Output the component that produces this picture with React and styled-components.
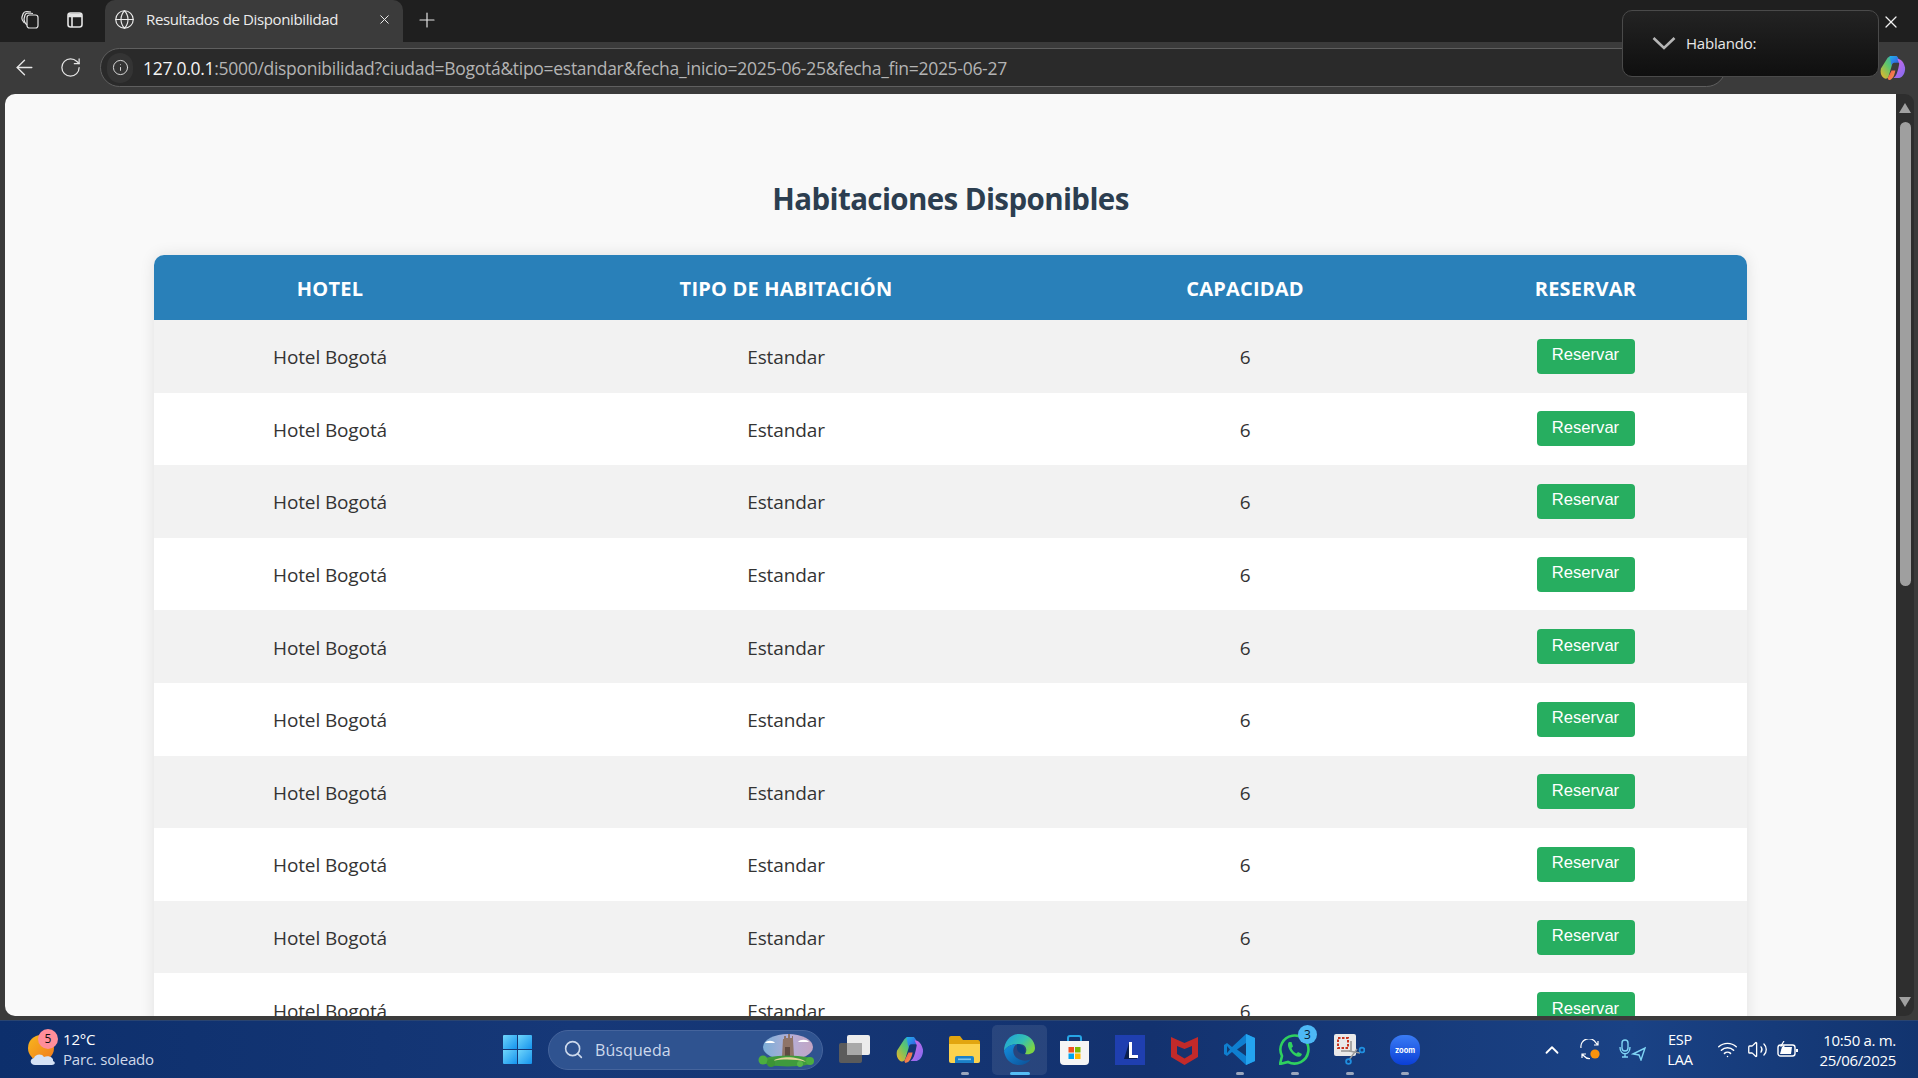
import React from 'react';
import styled, { createGlobalStyle } from 'styled-components';
import { ArrowLeft, RotateCw, Info, Globe, X, Plus, ChevronUp, Search, Wifi, Volume2 } from 'lucide-react';

const UI = '"Open Sans", "Noto Sans", "Liberation Sans", sans-serif';

const GlobalStyle = createGlobalStyle`
    html, body {
        margin: 0;
        height: 100%;
        overflow: hidden;
        background: #3b3b3b;
    }
    * {
        box-sizing: border-box;
    }
`;

const Screen = styled.div`
    position: relative;
    display: flex;
    flex-direction: column;
    height: 100vh;
    overflow: hidden;
    font-family: ${UI};
`;

const TabStrip = styled.div`
    display: flex;
    align-items: flex-end;
    height: 42px;
    flex: none;
    background: #1f1f1f;
`;

const StripButton = styled.div`
    display: flex;
    align-items: center;
    justify-content: center;
    width: ${p => p.$w || 44}px;
    height: 42px;
    padding-bottom: 2px;
    color: #e4e4e4;
    flex: none;
`;

const Tab = styled.div`
    display: flex;
    align-items: center;
    width: 298px;
    height: 42px;
    margin-left: 15px;
    padding: 0 11px 4px 9px;
    background: #3b3b3b;
    border-radius: 10px 10px 0 0;
    color: #ececec;
    flex: none;
`;

const TabTitle = styled.span`
    flex: 1;
    margin-left: 11px;
    font-size: 15px;
    letter-spacing: -0.37px;
    white-space: nowrap;
`;

const Toolbar = styled.div`
    display: flex;
    align-items: center;
    height: 52px;
    flex: none;
    padding: 0 12px 1px 0;
    background: #3b3b3b;
`;

const NavButton = styled.div`
    display: flex;
    align-items: center;
    justify-content: center;
    width: ${p => p.$w}px;
    color: #e6e6e6;
    flex: none;
`;

const Omnibox = styled.div`
    display: flex;
    align-items: center;
    width: 1626px;
    height: 39px;
    margin-left: 8px;
    padding-left: 6px;
    border: 1px solid #5f5f5f;
    border-radius: 20px;
    background: #2a2a2a;
    flex: none;
`;

const InfoPill = styled.div`
    display: flex;
    align-items: center;
    justify-content: center;
    width: 26px;
    height: 30px;
    border-radius: 15px;
    background: #343434;
    color: #d8d8d8;
`;

const Url = styled.span`
    margin-left: 10px;
    font-size: 17.5px;
    letter-spacing: -0.29px;
    color: #b4b4b4;
    white-space: nowrap;
`;

const UrlHost = styled.span`
    color: #f4f4f4;
`;

const CopilotSlot = styled.div`
    margin-left: auto;
    display: flex;
`;

const ViewArea = styled.div`
    display: flex;
    flex: 1;
    min-height: 0;
    padding: 0 4px 4px 5px;
    background: #3b3b3b;
`;

const Page = styled.main`
    flex: 1;
    min-width: 0;
    overflow: hidden;
    border-radius: 10px 0 0 10px;
    background: #f9f9f9;
    padding-top: 1px;
    color: #333;
`;

const Heading = styled.h1`
    margin: 85px 0 37px;
    text-align: center;
    font-size: 29.5px;
    line-height: 38px;
    font-weight: 700;
    letter-spacing: -0.6px;
    color: #2c3e50;
`;

const Table = styled.table`
    width: 1593px;
    margin: 0 auto;
    table-layout: fixed;
    border-collapse: collapse;
    border-radius: 10px;
    overflow: hidden;
    background: #fff;
    box-shadow: 0 0 15px rgba(0, 0, 0, 0.1);
`;

const HeadCell = styled.th`
    height: 65px;
    padding: 2px 0 0;
    background: #2980b9;
    color: #fff;
    font-size: 20px;
    font-weight: 700;
    letter-spacing: 0.2px;
    text-transform: uppercase;
    text-align: center;
`;

const Row = styled.tr`
    height: 72.6px;
    background: ${p => (p.$odd ? '#f2f2f2' : '#fff')};
`;

const Cell = styled.td`
    padding: 2px 0 0;
    font-size: 19px;
    letter-spacing: -0.12px;
    text-align: center;
    color: #333;
`;

const ButtonCell = styled.td`
    padding: 0;
`;

const ReserveButton = styled.button`
    display: block;
    width: 98px;
    height: 35px;
    margin: 0 auto;
    padding: 0 0 2px;
    border: none;
    border-radius: 4px;
    background: #27ae60;
    color: #fff;
    font-family: "Liberation Sans", Arial, sans-serif;
    font-size: 16.6px;
`;

const Scrollbar = styled.div`
    display: flex;
    flex-direction: column;
    align-items: center;
    width: 18px;
    flex: none;
    border-radius: 0 9px 9px 0;
    background: #2e2e2e;
`;

const ScrollArrow = styled.div`
    width: 0;
    height: 0;
    margin: ${p => (p.$down ? 'auto 0 9px' : '9px 0 9px')};
    border-left: 6.5px solid transparent;
    border-right: 6.5px solid transparent;
    border-bottom: ${p => (p.$down ? '0' : '10px solid #a0a0a0')};
    border-top: ${p => (p.$down ? '10px solid #a0a0a0' : '0')};
`;

const ScrollThumb = styled.div`
    width: 11px;
    height: 464px;
    border-radius: 6px;
    background: #9f9f9f;
`;

const Taskbar = styled.footer`
    display: flex;
    align-items: center;
    height: 58px;
    flex: none;
    background: linear-gradient(90deg, #0d2f6c 0%, #163878 30%, #13326f 60%, #1a4285 85%, #12346f 100%);
    border-top: 1px solid #2a4470;
    color: #fff;
`;

const Weather = styled.div`
    display: flex;
    align-items: center;
    width: 490px;
    padding-left: 27px;
    flex: none;
`;

const WeatherIcon = styled.div`
    position: relative;
    width: 30px;
    height: 38px;
    flex: none;
`;

const WeatherBadge = styled.span`
    position: absolute;
    top: -2px;
    left: 11px;
    width: 20px;
    height: 20px;
    border-radius: 50%;
    background: #ff8e9a;
    color: #111;
    font-size: 12px;
    line-height: 20px;
    text-align: center;
`;

const WeatherText = styled.div`
    margin: -1px 0 0 6px;
    font-size: 15px;
    line-height: 20px;
    letter-spacing: -0.2px;
`;

const WeatherNote = styled.div`
    color: #cfd9ea;
`;

const TaskSlot = styled.div`
    position: relative;
    display: flex;
    align-items: center;
    justify-content: center;
    width: 55px;
    height: 50px;
    flex: none;
    border-radius: 5px;
    background: ${p => (p.$active ? 'rgba(255,255,255,0.09)' : 'transparent')};
`;

const RunDot = styled.span`
    position: absolute;
    bottom: 0;
    left: 50%;
    width: ${p => (p.$active ? 20 : 8)}px;
    height: 3px;
    margin-left: ${p => (p.$active ? -10 : -4)}px;
    border-radius: 2px;
    background: ${p => (p.$active ? '#55bdf5' : '#9aa6bd')};
`;

const CountBadge = styled.span`
    position: absolute;
    top: 0;
    right: 5px;
    width: 19px;
    height: 19px;
    border-radius: 50%;
    background: #4db8f5;
    color: #0b1c33;
    font-size: 12px;
    line-height: 19px;
    text-align: center;
`;

const SearchBox = styled.div`
    display: flex;
    align-items: center;
    width: 275px;
    height: 40px;
    margin: 0 4px 0 3px;
    padding: 0 6px 0 14px;
    border: 1px solid #45649c;
    border-radius: 20px;
    background: #2f5390;
    color: #cdd9ec;
    flex: none;
`;

const SearchLabel = styled.span`
    flex: 1;
    margin-left: 11px;
    font-size: 16px;
    letter-spacing: 0.1px;
`;

const Tray = styled.div`
    display: flex;
    align-items: center;
    margin-left: auto;
    padding-right: 22px;
`;

const TrayIcon = styled.div`
    display: flex;
    align-items: center;
    justify-content: center;
    width: ${p => p.$w || 30}px;
    flex: none;
`;

const Lang = styled.div`
    width: 44px;
    margin: 0 10px 0 7px;
    font-size: 14.5px;
    line-height: 20px;
    letter-spacing: -0.2px;
    text-align: center;
`;

const Clock = styled.div`
    width: 94px;
    font-size: 15px;
    line-height: 20px;
    letter-spacing: -0.3px;
    text-align: right;
    white-space: nowrap;
`;

const SpeechPanel = styled.div`
    position: absolute;
    top: 10px;
    left: 1622px;
    display: flex;
    align-items: center;
    width: 257px;
    height: 67px;
    padding: 0 0 2px 29px;
    border: 1px solid #4a4a4a;
    border-radius: 10px;
    background: linear-gradient(180deg, #232323, #0f0f0f);
    color: #e8e8e8;
    font-size: 15px;
    letter-spacing: -0.2px;
`;

const SpeechLabel = styled.span`
    margin-left: 10px;
`;

const SpeechClose = styled.div`
    position: absolute;
    top: 12px;
    left: 1881px;
    color: #f2f2f2;
`;

const CopilotMark = ({ size = 28 }) => (
    <svg width={size} height={size} viewBox="0 0 28 28">
        <defs>
            <linearGradient id="cpA" x1="0" y1="0" x2="1" y2="1">
                <stop offset="0" stopColor="#1fb4e8" />
                <stop offset="0.55" stopColor="#2f7ae8" />
                <stop offset="1" stopColor="#2d4fc4" />
            </linearGradient>
            <linearGradient id="cpB" x1="0" y1="1" x2="1" y2="0">
                <stop offset="0" stopColor="#f5b324" />
                <stop offset="0.5" stopColor="#5fc66a" />
                <stop offset="1" stopColor="#25a4d8" />
            </linearGradient>
            <linearGradient id="cpC" x1="0" y1="0" x2="1" y2="1">
                <stop offset="0" stopColor="#d868e6" />
                <stop offset="1" stopColor="#7f6cf0" />
            </linearGradient>
            <linearGradient id="cpD" x1="0" y1="0" x2="1" y2="1">
                <stop offset="0" stopColor="#f04f4f" />
                <stop offset="1" stopColor="#f7a14a" />
            </linearGradient>
        </defs>
        <path d="M9 4 C11 2 13 2 17 2 L19 2 C16 3 15 6 13 13 L10 23 C9 26 7 26 5 25 C2 23 1 19 2 15 Z" fill="url(#cpB)" />
        <path d="M11 2 L18 2 C20 3 21 6 21 9 L16 9 C14 9 13.5 10 13 12 Z" fill="url(#cpA)" />
        <path d="M19 5 C23 5 26 9 27 14 C27.5 19 25 24 21 25 L15 25 C18 23 19 19 20 15 L21 10 Z" fill="url(#cpC)" />
        <path d="M9 25 L13 17 L17 17 C16 22 14 27 10 27 Z" fill="url(#cpD)" />
    </svg>
);

const CollectionsIcon = () => (
    <svg width="20" height="20" viewBox="0 0 20 20" fill="none" stroke="currentColor" strokeWidth="1.2">
        <rect x="7" y="5" width="11" height="13" rx="2.5" />
        <path d="M7 15 C4.5 13 4 11 4 9 L5 5 C5.5 3.5 7 3 8.5 3 L13 3.5" />
        <path d="M4.5 13 C2.5 11 1.5 9 2 7 L3 4 C3.5 2.5 5 1.5 7 1.5 L11 2" />
    </svg>
);

const SidebarIcon = () => (
    <svg width="18" height="18" viewBox="0 0 18 18" fill="none" stroke="currentColor" strokeWidth="1.6">
        <rect x="2" y="2" width="14" height="14" rx="2.5" />
        <path d="M2 5.5 H16 M6 5.5 V16" />
        <path d="M2.5 2.5 H15.5 V5 H2.5 Z" fill="currentColor" stroke="none" />
    </svg>
);

const SpeechChevron = () => (
    <svg width="24" height="14" viewBox="0 0 24 14" fill="none" stroke="#b5b5b5" strokeWidth="2.6">
        <path d="M1.5 2 L12 12 L22.5 2" />
    </svg>
);

const WeatherArt = () => (
    <svg width="30" height="38" viewBox="0 0 30 38">
        <defs>
            <linearGradient id="sun" x1="0" y1="0" x2="1" y2="1">
                <stop offset="0" stopColor="#f8b81e" />
                <stop offset="1" stopColor="#f0791c" />
            </linearGradient>
        </defs>
        <circle cx="14" cy="17" r="13" fill="url(#sun)" />
        <path d="M8 34 C3 34 2 28 7 27 C8 23 15 22 17 26 C22 24 27 27 26 30 C29 31 28 34 25 34 Z" fill="#d5e2f5" />
    </svg>
);

const StartIcon = () => (
    <svg width="29" height="29" viewBox="0 0 29 29">
        <defs>
            <linearGradient id="win" x1="0" y1="0" x2="1" y2="1">
                <stop offset="0" stopColor="#6fd5fb" />
                <stop offset="1" stopColor="#1493ee" />
            </linearGradient>
        </defs>
        <path d="M1 0 H14 V14 H0 V1 A1 1 0 0 1 1 0 Z" fill="url(#win)" />
        <path d="M15 0 H28 A1 1 0 0 1 29 1 V14 H15 Z" fill="url(#win)" />
        <path d="M0 15 H14 V29 H1 A1 1 0 0 1 0 28 Z" fill="url(#win)" />
        <path d="M15 15 H29 V28 A1 1 0 0 1 28 29 H15 Z" fill="url(#win)" />
    </svg>
);

const SearchArt = () => (
    <svg width="58" height="34" viewBox="0 0 58 34">
        <defs>
            <linearGradient id="sky" x1="0" y1="0" x2="1" y2="0">
                <stop offset="0" stopColor="#8fc6ea" />
                <stop offset="0.6" stopColor="#d9c3e6" />
                <stop offset="1" stopColor="#e8b9d0" />
            </linearGradient>
        </defs>
        <ellipse cx="30" cy="14" rx="25" ry="13" fill="url(#sky)" opacity="0.8" />
        <path d="M7 10 C9 7 15 7 17 10 Z M40 9 C42 6 49 6 51 9 Z" fill="#fff" />
        <path d="M24 24 L25 6 H26 V3 H28 V5 H30 V1 H32 V5 H34 V3 H35 V6 L36 24 Z" fill="#8f7468" />
        <rect x="27" y="14" width="5" height="9" fill="#5f4a42" />
        <ellipse cx="30" cy="28" rx="26" ry="5.5" fill="#3f9a3c" />
        <path d="M15 28 C22 23 40 23 48 29 C38 26 24 26 15 28 Z" fill="#e2d49a" />
        <circle cx="5" cy="27" r="4.5" fill="#4cae3f" />
        <circle cx="13" cy="30" r="4" fill="#3c9435" />
        <circle cx="52" cy="28" r="4" fill="#4cae3f" />
        <circle cx="42" cy="31" r="3" fill="#57b548" />
    </svg>
);

const TaskViewIcon = () => (
    <svg width="31" height="29" viewBox="0 0 31 29">
        <rect x="0" y="8" width="23" height="20" rx="2" fill="#5b5b5b" />
        <rect x="8" y="0" width="23" height="20" rx="2" fill="#ececec" />
        <rect x="8" y="8" width="15" height="12" fill="#a9a9a9" />
    </svg>
);

const ExplorerIcon = () => (
    <svg width="31" height="27" viewBox="0 0 31 27">
        <path d="M0 2 A2 2 0 0 1 2 0 H11 L14 4 H29 A2 2 0 0 1 31 6 V10 H0 Z" fill="#e2a50f" />
        <path d="M0 8 H31 V25 A2 2 0 0 1 29 27 H2 A2 2 0 0 1 0 25 Z" fill="#fcd24d" />
        <path d="M6 27 V22 A2 2 0 0 1 8 20 H23 A2 2 0 0 1 25 22 V27 Z" fill="#1b80c8" />
        <rect x="9" y="22.5" width="13" height="1.6" fill="#7cc3ee" />
    </svg>
);

const EdgeIcon = () => (
    <svg width="31" height="31" viewBox="0 0 31 31">
        <defs>
            <linearGradient id="edgeTop" x1="0" y1="0" x2="1" y2="0.6">
                <stop offset="0" stopColor="#1b9de2" />
                <stop offset="0.6" stopColor="#35c1b1" />
                <stop offset="1" stopColor="#7cd444" />
            </linearGradient>
            <linearGradient id="edgeLow" x1="0" y1="0" x2="1" y2="1">
                <stop offset="0" stopColor="#1490df" />
                <stop offset="1" stopColor="#0c4f96" />
            </linearGradient>
        </defs>
        <path d="M15 0 C24 0 31 6 31 14 C31 19 26 21 21 20 C24 16 22 10 15 10 C8 10 3 12 0 17 C0 8 6 0 15 0 Z" fill="url(#edgeTop)" />
        <path d="M0 17 C3 12 8 10 13 10 C7 13 8 24 17 26 C20 27 24 27 27 25 C24 29 20 31 15 31 C7 31 1 25 0 17 Z" fill="url(#edgeLow)" />
        <path d="M13 10 C18 10 22 14 21 20 C17 20 13 18 13 14 Z" fill="#0d3f82" />
    </svg>
);

const StoreIcon = () => (
    <svg width="29" height="30" viewBox="0 0 29 30">
        <path d="M8 7 V3 A2 2 0 0 1 10 1 H19 A2 2 0 0 1 21 3 V7" fill="none" stroke="#27a5e6" strokeWidth="2" />
        <path d="M0 6 H29 V26 A4 4 0 0 1 25 30 H4 A4 4 0 0 1 0 26 Z" fill="#f5f5f5" />
        <rect x="8.5" y="12" width="5.5" height="5.5" fill="#f25022" />
        <rect x="15" y="12" width="5.5" height="5.5" fill="#7fba00" />
        <rect x="8.5" y="18.5" width="5.5" height="5.5" fill="#00a4ef" />
        <rect x="15" y="18.5" width="5.5" height="5.5" fill="#ffb900" />
    </svg>
);

const LIcon = () => (
    <svg width="30" height="30" viewBox="0 0 30 30">
        <rect width="30" height="30" fill="#1f3fb0" />
        <path d="M9 24 L14 8 V22 H22 V24 Z" fill="#0b1f4f" />
        <path d="M14 7 H17 V20 H23 V23 H14 Z" fill="#fff" />
    </svg>
);

const McafeeIcon = () => (
    <svg width="27" height="30" viewBox="0 0 27 30">
        <path d="M0 2 L13.5 8 L27 2 V22 L13.5 30 L0 22 Z" fill="#c22a2a" />
        <path d="M6 11 L13.5 14 L21 11 V19 L13.5 23.5 L6 19 Z" fill="#16336f" />
    </svg>
);

const CodeIcon = () => (
    <svg width="31" height="31" viewBox="0 0 31 31">
        <path d="M22 0 L31 4 V27 L22 31 L8 18 L3 22 L0 20 V11 L3 9 L8 13 Z" fill="#0f7fd0" />
        <path d="M22 0 L31 4 V27 L22 31 Z" fill="#24a4ef" />
        <path d="M22 9 V22 L13 15.5 Z" fill="#12386f" />
        <path d="M3 12 L6 15.5 L3 19 Z" fill="#12386f" />
    </svg>
);

const WhatsappIcon = () => (
    <svg width="31" height="31" viewBox="0 0 31 31">
        <path d="M1 30 L3 22 A14 14 0 1 1 9 28 Z" fill="none" stroke="#2fd05f" strokeWidth="2.6" />
        <path d="M10 8 C8 10 9 14 12 18 C15 22 20 24 22 22 L23 20 L19 18 L17.5 19.5 C15 18.5 13 16 12.5 14 L14 12.5 L12.5 8 Z" fill="#2fd05f" />
    </svg>
);

const SnipIcon = () => (
    <svg width="31" height="31" viewBox="0 0 31 31" fill="none">
        <rect x="0" y="0" width="22" height="22" rx="2" fill="#e9e9e9" />
        <rect x="4" y="4" width="10" height="10" stroke="#c8341f" strokeWidth="2" strokeDasharray="2.5 1.5" />
        <path d="M7 17 H17 V7" stroke="#a8a8a8" strokeWidth="2" />
        <path d="M15 26 L23 15 M15 17 L26 19" stroke="#9a9a9a" strokeWidth="1.4" />
        <circle cx="14.5" cy="27.5" r="2.4" stroke="#1f8fe0" strokeWidth="1.8" />
        <circle cx="28" cy="16" r="2.4" stroke="#1f8fe0" strokeWidth="1.8" />
    </svg>
);

const ZoomIcon = () => (
    <svg width="30" height="30" viewBox="0 0 30 30">
        <defs>
            <linearGradient id="zm" x1="0" y1="0" x2="0" y2="1">
                <stop offset="0" stopColor="#3a7cf5" />
                <stop offset="1" stopColor="#0b3fd6" />
            </linearGradient>
        </defs>
        <rect width="30" height="30" rx="13" fill="url(#zm)" />
        <text x="15" y="17.5" textAnchor="middle" fontSize="7.5" fontWeight="700" fontFamily="Inter, sans-serif" fill="#fff">zoom</text>
    </svg>
);

const SyncIcon = () => (
    <svg width="21" height="21" viewBox="0 0 21 21" fill="none" stroke="#fff" strokeWidth="1.2">
        <path d="M1 9 A8 8 0 0 1 16 4 L18 6 M18 2 V6 H14" />
        <path d="M2 19 V15 H6 M2 15 L4 17 A7 7 0 0 0 10 19.5" />
        <circle cx="15" cy="15" r="4.6" fill="#f7930e" stroke="none" />
    </svg>
);

const MicLocationIcon = () => (
    <svg width="27" height="22" viewBox="0 0 27 22" fill="none" stroke="#7fd4f5" strokeWidth="1.4">
        <rect x="3" y="1" width="6" height="11" rx="3" />
        <path d="M1 8 C1 17 11 17 11 8 M6 15 V18 M3 18 H9" />
        <path d="M14 15 L26 9 L22 21 L20 16 Z" />
    </svg>
);

const BatteryIcon = () => (
    <svg width="21" height="18" viewBox="0 0 21 18" fill="none" stroke="#fff" strokeWidth="1.4">
        <rect x="1" y="4" width="17" height="11" rx="2.5" />
        <path d="M20 8 V11" strokeWidth="2" />
        <path d="M3 13 L5 6 H15 L14 13 Z" fill="#fff" stroke="none" />
        <path d="M7 0 L4 5 H7 L5 9" strokeWidth="1.2" />
    </svg>
);

const rows = Array.from({ length: 10 }, (_, i) => i);

const taskIcons = [
    { key: 'task', icon: <TaskViewIcon /> },
    { key: 'copilot', icon: <CopilotMark size={29} /> },
    { key: 'explorer', icon: <ExplorerIcon />, dot: true },
    { key: 'edge', icon: <EdgeIcon />, dot: true, active: true },
    { key: 'store', icon: <StoreIcon /> },
    { key: 'l', icon: <LIcon /> },
    { key: 'mcafee', icon: <McafeeIcon /> },
    { key: 'code', icon: <CodeIcon />, dot: true },
    { key: 'whatsapp', icon: <WhatsappIcon />, dot: true, badge: '3' },
    { key: 'snip', icon: <SnipIcon />, dot: true },
    { key: 'zoom', icon: <ZoomIcon />, dot: true },
];

const App = () => {
    return (
        <Screen>
            <GlobalStyle />
            <TabStrip>
                <StripButton $w={60}><CollectionsIcon /></StripButton>
                <StripButton $w={30}><SidebarIcon /></StripButton>
                <Tab>
                    <Globe size={21} strokeWidth={1.3} />
                    <TabTitle>Resultados de Disponibilidad</TabTitle>
                    <X size={15} strokeWidth={1.6} />
                </Tab>
                <StripButton $w={48}><Plus size={24} strokeWidth={1.2} /></StripButton>
            </TabStrip>
            <Toolbar>
                <NavButton $w={48}><ArrowLeft size={25} strokeWidth={1.3} /></NavButton>
                <NavButton $w={44}><RotateCw size={23} strokeWidth={1.3} /></NavButton>
                <Omnibox>
                    <InfoPill><Info size={17} strokeWidth={1.4} /></InfoPill>
                    <Url>
                        <UrlHost>127.0.0.1</UrlHost>:5000/disponibilidad?ciudad=Bogotá&tipo=estandar&fecha_inicio=2025-06-25&fecha_fin=2025-06-27
                    </Url>
                </Omnibox>
                <CopilotSlot><CopilotMark size={27} /></CopilotSlot>
            </Toolbar>
            <ViewArea>
                <Page>
                    <Heading>Habitaciones Disponibles</Heading>
                    <Table>
                        <colgroup>
                            <col width="352" />
                            <col width="560" />
                            <col width="358" />
                            <col width="323" />
                        </colgroup>
                        <thead>
                            <tr>
                                <HeadCell>Hotel</HeadCell>
                                <HeadCell>Tipo de Habitación</HeadCell>
                                <HeadCell>Capacidad</HeadCell>
                                <HeadCell>Reservar</HeadCell>
                            </tr>
                        </thead>
                        <tbody>
                            {rows.map(i => (
                                <Row key={i} $odd={i % 2 === 0}>
                                    <Cell>Hotel Bogotá</Cell>
                                    <Cell>Estandar</Cell>
                                    <Cell>6</Cell>
                                    <ButtonCell><ReserveButton>Reservar</ReserveButton></ButtonCell>
                                </Row>
                            ))}
                        </tbody>
                    </Table>
                </Page>
                <Scrollbar>
                    <ScrollArrow />
                    <ScrollThumb />
                    <ScrollArrow $down />
                </Scrollbar>
            </ViewArea>
            <Taskbar>
                <Weather>
                    <WeatherIcon>
                        <WeatherArt />
                        <WeatherBadge>5</WeatherBadge>
                    </WeatherIcon>
                    <WeatherText>
                        12°C
                        <WeatherNote>Parc. soleado</WeatherNote>
                    </WeatherText>
                </Weather>
                <TaskSlot><StartIcon /></TaskSlot>
                <SearchBox>
                    <Search size={21} strokeWidth={1.8} />
                    <SearchLabel>Búsqueda</SearchLabel>
                    <SearchArt />
                </SearchBox>
                {taskIcons.map(t => (
                    <TaskSlot key={t.key} $active={t.active}>
                        {t.icon}
                        {t.badge && <CountBadge>{t.badge}</CountBadge>}
                        {t.dot && <RunDot $active={t.active} />}
                    </TaskSlot>
                ))}
                <Tray>
                    <TrayIcon $w={30}><ChevronUp size={22} strokeWidth={2} /></TrayIcon>
                    <TrayIcon $w={46}><SyncIcon /></TrayIcon>
                    <TrayIcon $w={38}><MicLocationIcon /></TrayIcon>
                    <Lang>ESP<br />LAA</Lang>
                    <TrayIcon $w={30}><Wifi size={21} strokeWidth={1.7} /></TrayIcon>
                    <TrayIcon $w={30}><Volume2 size={21} strokeWidth={1.5} /></TrayIcon>
                    <TrayIcon $w={30}><BatteryIcon /></TrayIcon>
                    <Clock>10:50 a. m.<br />25/06/2025</Clock>
                </Tray>
            </Taskbar>
            <SpeechPanel>
                <SpeechChevron />
                <SpeechLabel>Hablando:</SpeechLabel>
            </SpeechPanel>
            <SpeechClose><X size={20} strokeWidth={1.5} /></SpeechClose>
        </Screen>
    );
};

export default App;
